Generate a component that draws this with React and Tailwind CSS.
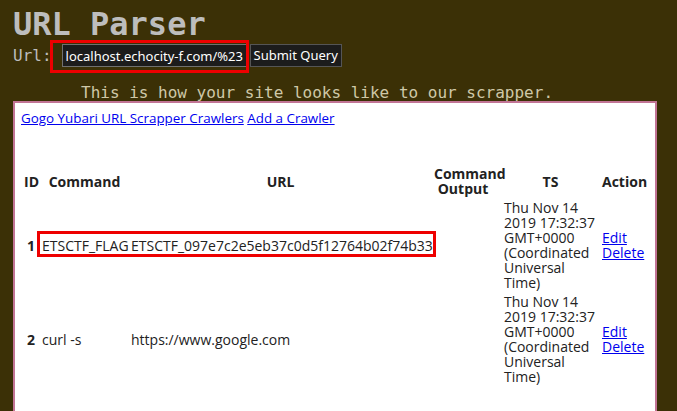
import React from 'react';

const rows = [
  { id: 1, command: 'ETSCTF_FLAG', url: 'ETSCTF_097e7c2e5eb37c0d5f12764b02f74b33', flagged: true },
  { id: 2, command: 'curl -s', url: 'https://www.google.com', flagged: false },
];

const ts = 'Thu Nov 14 2019 17:32:37 GMT+0000 (Coordinated Universal Time)';

const CrawlerTable = () => (
  <table className="w-full table-fixed border-separate border-spacing-[2px] text-[14px] leading-[15px] text-[#222]">
    <colgroup>
      <col className="w-[16px]" />
      <col className="w-[87px]" />
      <col className="w-[301px]" />
      <col className="w-[60px]" />
      <col className="w-[103px]" />
      <col />
    </colgroup>
    <thead>
      <tr className="font-bold">
        <th className="p-px">ID</th>
        <th className="p-px">Command</th>
        <th className="p-px">URL</th>
        <th className="p-px">Command Output</th>
        <th className="p-px pl-[9px]">TS</th>
        <th className="p-px pl-[2px]">Action</th>
      </tr>
    </thead>
    <tbody>
      {rows.map((row) => (
        <tr key={row.id}>
          <td className="p-px text-center font-bold">{row.id}</td>
          <td className="p-px whitespace-nowrap">
            {row.flagged ? (
              <span className="relative">
                {row.command}
                <span className="pointer-events-none absolute -left-[5px] -top-[5px] h-[26px] w-[399px] border-[3px] border-[#ee0000]"></span>
              </span>
            ) : (
              row.command
            )}
          </td>
          <td className="p-px whitespace-nowrap">{row.url}</td>
          <td className="p-px"></td>
          <td className="p-px pl-[9px]">{ts}</td>
          <td className="p-px pl-[2px]">
            <a href="#" className="block text-[#0000ee] underline">Edit</a>
            <a href="#" className="block text-[#0000ee] underline">Delete</a>
          </td>
        </tr>
      ))}
    </tbody>
  </table>
);

export default function App() {
  return (
    <div className="min-h-[411px] overflow-hidden bg-[#3b3006] pl-[13px] pr-[20px] pt-[6px] font-['DejaVu_Sans_Mono',monospace]">
      <h1 className="text-[32px] leading-[36px] font-bold text-[#bdbdbd]">URL Parser</h1>

      <form className="flex items-center mt-[2px] h-[23px]" onSubmit={(e) => e.preventDefault()}>
        <span className="text-[16px] text-[#bdbdbd] mr-[10px]">Url:</span>
        <span className="relative">
          <input
            type="text"
            defaultValue="localhost.echocity-f.com/%23"
            className="block w-[186px] h-[23px] bg-[#1c1c1c] border border-[#707070] px-[3px] text-[13px] text-white font-['Noto_Sans',sans-serif] outline-none"
          />
          <span className="pointer-events-none absolute -left-[12px] -top-[4px] h-[33px] w-[199px] border-[3px] border-[#ee0000]"></span>
        </span>
        <button
          type="submit"
          className="ml-[2px] h-[23px] bg-[#1c1c1c] border border-[#555] px-[3px] text-[13px] text-white font-['Noto_Sans',sans-serif]"
        >
          Submit Query
        </button>
      </form>

      <p className="pl-[68px] mt-[18px] text-[16px] leading-[16px] text-[#cfc8a8]">
        This is how your site looks like to our scrapper.
      </p>

      <div className="h-[320px] w-[644px] border-2 border-[#c27495] bg-white px-[6px] pt-[6px] font-['Open_Sans',sans-serif]">
        <div className="text-[13.4px] leading-[18px]">
          <a href="#" className="text-[#0000ee] underline">Gogo Yubari URL Scrapper Crawlers</a>{' '}
          <a href="#" className="text-[#0000ee] underline">Add a Crawler</a>
        </div>
        <div className="mt-[36px]">
          <CrawlerTable />
        </div>
      </div>
    </div>
  );
}
